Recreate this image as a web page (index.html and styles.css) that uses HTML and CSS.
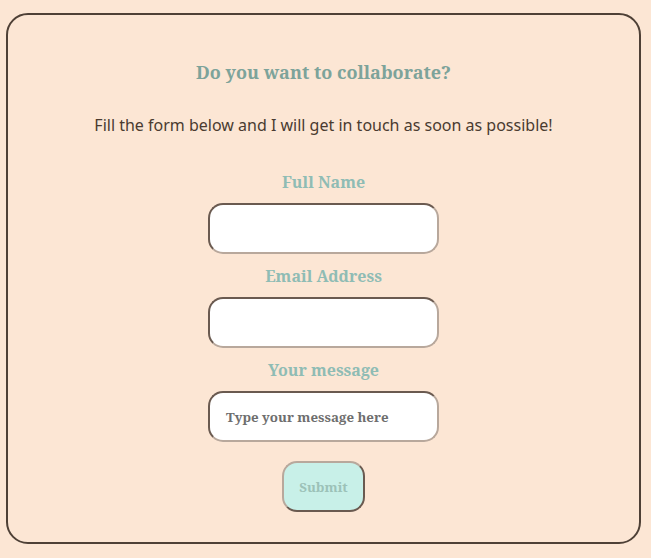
FILE: index.html
```html
<!DOCTYPE html>
<html lang="en">
<head>
<meta charset="utf-8">
<title>Contact</title>
<link rel="stylesheet" href="styles.css">
</head>
<body>
<section class="card">
  <h2 class="title">Do you want to collaborate?</h2>
  <p class="intro">Fill the form below and I will get in touch as soon as possible!</p>
  <form class="form">
    <label class="label" for="name">Full Name</label>
    <input class="field" id="name" type="text">
    <label class="label" for="email">Email Address</label>
    <input class="field" id="email" type="email">
    <label class="label" for="msg">Your message</label>
    <textarea class="field area" id="msg" placeholder="Type your message here"></textarea>
    <button class="submit" type="button">Submit</button>
  </form>
</section>
</body>
</html>
```

FILE: styles.css
```css
html, body {
  margin: 0;
  background: #fce6d4;
}
body {
  padding: 13px 10px 0 6px;
}
.card {
  box-sizing: border-box;
  height: 531px;
  border: 2px solid #4e4036;
  border-radius: 22px;
  display: flex;
  flex-direction: column;
  align-items: center;
  padding-top: 43px;
}
.title {
  margin: 0;
  font-family: "Noto Serif", "DejaVu Serif", serif;
  font-weight: 700;
  font-size: 18px;
  line-height: 28px;
  color: #7da39a;
}
.intro {
  margin: 27px 0 0;
  font-family: "Noto Sans", sans-serif;
  font-size: 16px;
  line-height: 24px;
  color: #4a3b30;
}
.form {
  display: flex;
  flex-direction: column;
  align-items: center;
  margin-top: 34px;
}
.label {
  font-family: "Noto Serif", "DejaVu Serif", serif;
  font-weight: 700;
  font-size: 16px;
  line-height: 22px;
  color: #8fbcb4;
  margin: 0 0 10px;
}
.field + .label {
  margin-top: 11px;
}
.field {
  box-sizing: border-box;
  width: 231px;
  height: 51px;
  border: 2px solid;
  border-color: #6a5a50 #b8a89c #b8a89c #6a5a50;
  border-radius: 15px;
  background: #fff;
  padding: 0 16px;
  font-family: "Noto Serif", "DejaVu Serif", serif;
  font-size: 13.333px;
  font-weight: 700;
  outline: none;
}
.area {
  resize: none;
  padding-top: 15px;
  line-height: 18px;
  display: block;
}
.area::placeholder {
  color: #6e6e6e;
  opacity: 1;
}
.submit {
  box-sizing: border-box;
  margin-top: 19px;
  width: 83px;
  height: 51px;
  background: #c8f0e8;
  border: 2px solid;
  border-color: #b8a89c #6a5a50 #6a5a50 #b8a89c;
  border-radius: 15px;
  font-family: "Noto Serif", "DejaVu Serif", serif;
  font-weight: 700;
  font-size: 13.333px;
  color: #9cc2b8;
  padding: 0;
}
```
